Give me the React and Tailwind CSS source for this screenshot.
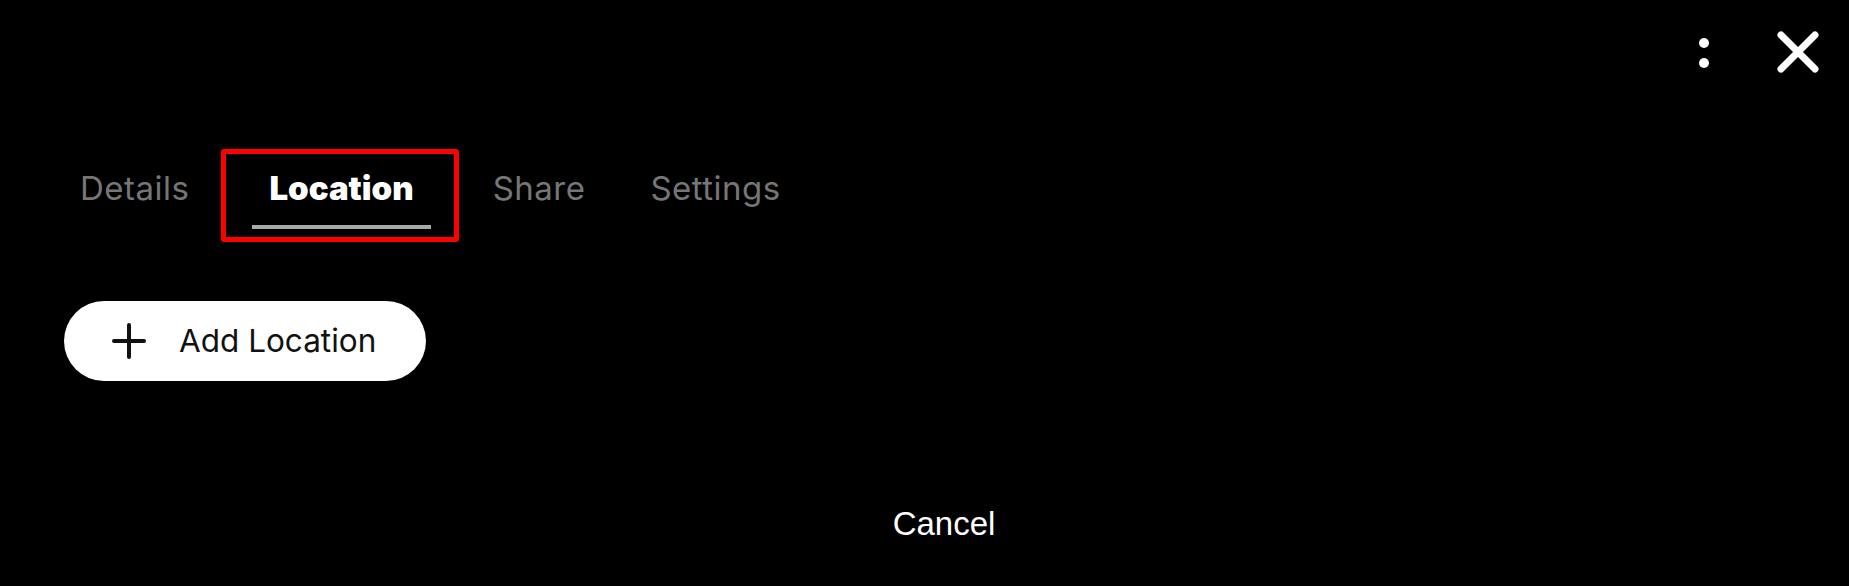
import React, { useState } from "react";

const tabs = ["Details", "Location", "Share", "Settings"];

// spacing before each tab, matched to the screenshot
const tabMargins = {
  Details: "ml-[80px]",
  Location: "ml-[32px]",
  Share: "ml-[34px]",
  Settings: "ml-[65px]",
};

const KebabIcon = () => (
  <svg width="10" height="30" viewBox="0 0 10 30" fill="white">
    <circle cx="5" cy="5" r="5" />
    <circle cx="5" cy="25" r="5" />
  </svg>
);

const CloseIcon = () => (
  <svg width="42" height="42" viewBox="0 0 42 42" stroke="white" strokeWidth="7" strokeLinecap="round">
    <line x1="4" y1="4" x2="38" y2="38" />
    <line x1="38" y1="4" x2="4" y2="38" />
  </svg>
);

const PlusIcon = () => (
  <svg width="34" height="36" viewBox="0 0 34 36" stroke="#111" strokeWidth="4" strokeLinecap="round">
    <line x1="17" y1="2" x2="17" y2="34" />
    <line x1="2" y1="18" x2="32" y2="18" />
  </svg>
);

const App = () => {
  const [activeTab, setActiveTab] = useState("Location");

  return (
    <div className="w-full h-[586px] bg-black flex flex-col font-['Inter',sans-serif]">
      {/* header actions */}
      <div className="h-[104px] flex justify-end items-center pr-[30px]">
        <button className="mr-[68px] mt-[2px]" type="button">
          <KebabIcon />
        </button>
        <button type="button">
          <CloseIcon />
        </button>
      </div>

      {/* tabs */}
      <div className="mt-[45px] flex items-start">
        {tabs.map((tab) =>
          tab === activeTab ? (
            <div
              key={tab}
              className={`${tabMargins[tab]} border-[5px] border-[#ff0000] rounded-[3px] pt-[14px] pb-[8px] pl-[26px] pr-[23px]`}
            >
              <button
                type="button"
                className="px-[17px] text-[33px] leading-[40px] font-black text-white"
              >
                {tab}
              </button>
              <div className="mt-[17px] h-[4px] bg-[#a9a9a9]"></div>
            </div>
          ) : (
            <button
              key={tab}
              type="button"
              onClick={() => setActiveTab(tab)}
              className={`${tabMargins[tab]} mt-[19px] text-[33px] leading-[40px] tracking-[0.015em] text-[#767676]`}
            >
              {tab}
            </button>
          )
        )}
      </div>

      {/* add location */}
      <div className="mt-[59px] pl-[64px]">
        <button
          type="button"
          className="w-[362px] h-[80px] rounded-full bg-white flex items-center pl-[48px]"
        >
          <PlusIcon />
          <span className="ml-[33px] text-[31.5px] text-[#111]">Add Location</span>
        </button>
      </div>

      {/* cancel */}
      <div className="mt-[125px] flex justify-center pl-[39px]">
        <button
          type="button"
          className="text-[33px] leading-[36px] text-white font-['Liberation_Sans',sans-serif]"
        >
          Cancel
        </button>
      </div>
    </div>
  );
};

export default App;
